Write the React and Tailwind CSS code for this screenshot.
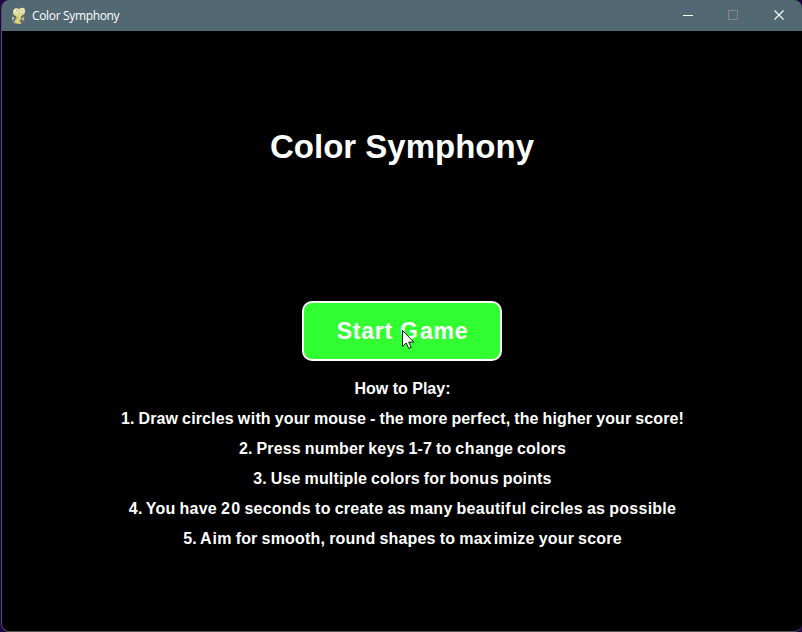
const instructions = [
  { id: "draw", style: "tracking-[0.12px] [word-spacing:-0.57px]", content: <>1. Draw circles <span className="tracking-[0.7px]">w</span>ith your mouse - the more perfect, the higher your score!</> },
  { id: "keys", style: "tracking-[0.17px] [word-spacing:-0.75px]", content: <>2. Press number keys 1-7 to <span className="tracking-[0.6px]">ch</span>ange colors</> },
  { id: "bonus", style: "tracking-[0.15px] [word-spacing:-0.7px]", content: <>3. Use multiple colors for bon<span className="tracking-[0.8px]">u</span>s points</> },
  { id: "time", style: "tracking-[0.24px] [word-spacing:-0.6px]", content: <>4.<span className="tracking-[-0.8px]"> </span>You have <span className="tracking-[1.2px]">2</span>0 seconds to create as many beauti<span className="tracking-[1.2px]">f</span>ul circles as possible</> },
  { id: "shapes", style: "tracking-[0.18px] [word-spacing:-0.55px]", content: <>5.<span className="tracking-[-0.9px]"> </span><span className="tracking-[1px]">A</span>im for smooth, round shapes to ma<span className="tracking-[2px]">x</span>imize your score</> },
];

function SnakeIcon() {
  return (
    <svg className="h-[18px] w-4" viewBox="0 0 16 18">
      <path d="M1 10 L4 8 L12 9 L14 11 L13 15 L10 17 H4 L1 14Z" fill="#77807a" />
      <path d="M4 8 L11 8 L10 12 L8 14 L11 16 L8 17 L4 16 L4 13 L6 11Z" fill="#dcd179" />
      <path d="M2 4 Q3 1 5.5 1 L8 2 Q10 0 13 1 Q15 3 14 6 Q12 9 8 9 Q3 9 2 7Z" fill="#e2d98a" />
      <circle cx="5.2" cy="3.8" r="1.9" fill="#f0eee0" />
      <circle cx="11.6" cy="3.5" r="1.9" fill="#f0eee0" />
      <path d="M5 3h1v1H5zM11 3h1v1h-1z" fill="#89908a" />
      <path d="M1 10h2v3H1zM11 10h2v3h-2zM3 14h2v2H3z" fill="#bab8a8" />
      <path d="M3 10h2M10 10h2M2 13h2M10 15h2" stroke="#414c50" fill="none" />
    </svg>
  );
}

function TitleBar() {
  return (
    <header className="flex h-[31px] shrink-0 items-center bg-[#526872] pl-[9px]">
      <SnakeIcon />
      <h2 className="ml-[5px] font-['Open_Sans','Noto_Sans',sans-serif] text-[12px] leading-[31px] tracking-[-0.34px] text-white">Color Symphony</h2>
      <div className="ml-auto flex h-full">
        <button aria-label="Minimize" className="flex w-[45px] items-center justify-center">
          <svg width="11" height="11"><path d="M0 5.5h10" stroke="white" /></svg>
        </button>
        <button aria-label="Maximize" className="flex w-[45px] items-center justify-center">
          <svg width="11" height="11"><rect x=".5" y=".5" width="9" height="9" fill="none" stroke="#858585" /></svg>
        </button>
        <button aria-label="Close" className="flex w-[46px] items-center justify-center">
          <svg width="11" height="11"><path d="M.5.5l9 9M9.5.5l-9 9" stroke="white" strokeWidth="1.1" /></svg>
        </button>
      </div>
    </header>
  );
}

export default function App() {
  return (
    <div className="h-[632px] w-[802px] overflow-hidden bg-[#210044] pl-px">
      <div className="flex h-[632px] flex-col overflow-hidden rounded-[8px] border-b border-l border-b-[#555555] border-l-[#555064] bg-black">
        <TitleBar />
        <main className="flex flex-col items-center font-['Liberation_Sans',Arial,sans-serif] font-bold text-white">
          <h1 className="mt-[96px] text-[33px] leading-[40px] whitespace-nowrap">Color Symphony</h1>
          <button className="relative mt-[134px] flex h-[60px] w-[200px] items-center justify-center rounded-[10px] border-2 border-white bg-[#32ff32] text-[23px]">
            <span className="pl-px tracking-[0.75px]">Start <span className="tracking-[2.2px]">G</span>ame</span>
            <svg className="absolute top-[27px] left-[98px]" width="13" height="20" viewBox="0 0 13 20">
              <path d="M.5.5v16l3.7-3.5 2.6 5.5 2.4-1.1-2.5-5.3h5.1z" fill="white" stroke="#15191c" />
            </svg>
          </button>
          <section className="mt-[13px] flex flex-col items-center pl-px text-[16px] leading-[30px] whitespace-nowrap">
            <h3>How to Play:</h3>
            {instructions.map((item) => <p key={item.id} className={item.style}>{item.content}</p>)}
          </section>
        </main>
      </div>
    </div>
  );
}
